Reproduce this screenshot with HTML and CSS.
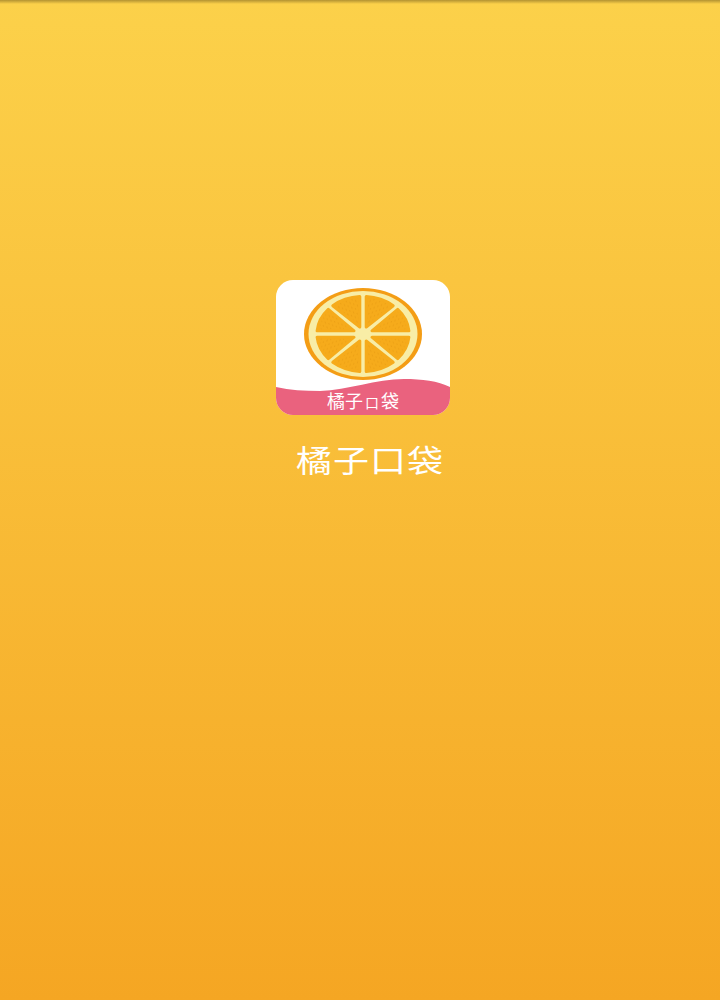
FILE: index.html
```html
<!DOCTYPE html>
<html lang="zh">
<head>
<meta charset="utf-8">
<title>橘子口袋</title>
<link rel="stylesheet" href="styles.css">
</head>
<body>
<main class="splash">
  <svg class="logo" width="174" height="135" viewBox="0 0 174 135" role="img" aria-label="橘子口袋">
    <defs>
      <clipPath id="logo-clip"><rect width="174" height="135" rx="17" ry="17"/></clipPath>
      <pattern id="pulp" width="6" height="5" patternUnits="userSpaceOnUse" patternTransform="rotate(20)">
        <rect width="6" height="5" fill="#f6ab1b"/>
        <rect x="1" y="0.5" width="1" height="2" fill="#eda116"/>
        <rect x="4" y="3" width="1" height="1.6" fill="#eda116"/>
      </pattern>
      <g id="wedges">
        <path class="wedge" d="M3.2 -7L3.2 -37.4A46 37.5 0 0 1 30.2 -28.3Z"/>
        <path class="wedge" d="M9 -3.2L34.7 -24.6A46 37.5 0 0 1 45.9 -3.2Z"/>
      </g>
    </defs>
    <g clip-path="url(#logo-clip)">
      <rect width="174" height="135" fill="#fff"/>
      <path d="M0 107C14 110 28 111 44 111C72 110 100 99 128 99C146 99 162 101 174 107V135H0Z" fill="#ea627e"/>
    </g>
    <g transform="translate(87 54)">
      <ellipse rx="59" ry="46" fill="#f49d15"/>
      <ellipse rx="54.5" ry="43" fill="#f8eda6"/>
      <use href="#wedges"/>
      <use href="#wedges" transform="scale(-1 1)"/>
      <use href="#wedges" transform="scale(1 -1)"/>
      <use href="#wedges" transform="scale(-1 -1)"/>
    </g>
    <text class="logo-text" x="87" y="128" text-anchor="middle"><tspan>橘子</tspan><tspan class="logo-text-small" dx="2">口</tspan><tspan dx="2">袋</tspan></text>
  </svg>
  <h1 class="title">橘子口袋</h1>
</main>
</body>
</html>
```
FILE: styles.css
```css
html, body {
  margin: 0;
  height: 100%;
}

body {
  background:
    linear-gradient(to bottom, rgba(90, 70, 20, 0.45), rgba(90, 70, 20, 0) 4px) no-repeat,
    linear-gradient(to bottom, #fcd14a 0%, #f5a623 100%);
  font-family: "Noto Sans CJK SC", "Noto Sans", sans-serif;
}

.splash {
  display: flex;
  flex-direction: column;
  align-items: flex-start;
  padding: 280px 0 0 276px;
}

.logo {
  display: block;
}

.wedge {
  fill: url(#pulp);
  stroke: #f6ab1b;
  stroke-width: 3;
  stroke-linejoin: round;
}

.logo-text {
  fill: #fff;
  font-family: "Noto Sans CJK SC", sans-serif;
  font-size: 18px;
  font-weight: 400;
}

.logo-text-small {
  font-size: 14px;
}

.title {
  margin: 17px 0 0 20px;
  color: #fff;
  font-size: 36px;
  font-weight: 400;
  line-height: 52px;
  letter-spacing: 1px;
  white-space: nowrap;
  transform: scaleY(0.86);
}
```
